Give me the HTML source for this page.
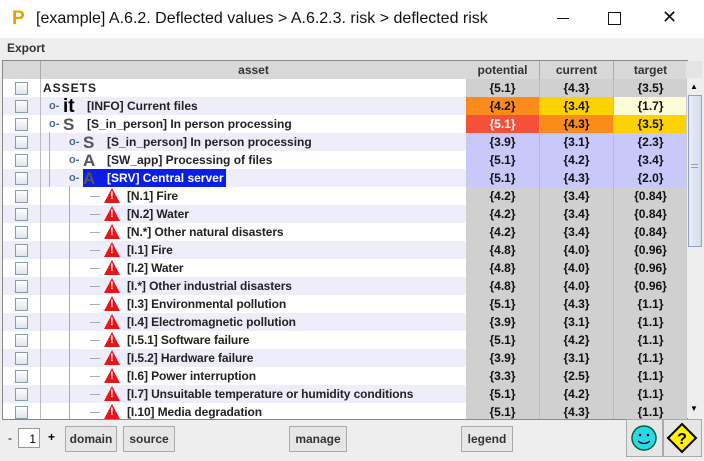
<html><head><style>
body{margin:0;width:704px;height:461px;background:#eeeeee;font-family:"Liberation Sans",sans-serif;position:relative;overflow:hidden}
.title{position:absolute;left:0;top:0;width:704px;height:38px;background:#fff;font-size:16px;color:#111}
.menu{position:absolute;top:38px;left:0;width:704px;height:20px;background:#eeeeee;font-size:12px;font-weight:bold;color:#333}
.tbl{position:absolute;left:2px;top:60px;width:684px;height:358px;overflow:hidden;background:#fff;border:1px solid #888}
.hdr{position:absolute;top:0;height:18px;background:#d8d8d8;border-right:1px solid #aaa;border-bottom:1px solid #999;font-size:12px;font-weight:bold;color:#333;text-align:center;line-height:18px}
.row{position:absolute;left:0;width:684px;height:18px;border-bottom:1px solid #ccd;font-size:12px;font-weight:bold;color:#222}
.cb{position:absolute;left:12px;top:3px;width:11px;height:11px;border:1px solid #8a9aa8;background:linear-gradient(#fff,#dde4ea)}
.v{position:absolute;top:0;height:18px;line-height:18px;text-align:center;width:73px;border-right:1px solid #bbb;color:#111}
.t{position:absolute;top:0;line-height:18px;white-space:nowrap}
.tri{position:absolute;top:1px;width:0;height:0;border-left:8px solid transparent;border-right:8px solid transparent;border-bottom:15px solid #e8141a}
.tri:after{content:"!";position:absolute;left:-2px;top:2px;color:#fff;font-size:11px;font-weight:bold}
.btn{position:absolute;top:426px;height:24px;border:1px solid #aaa;background:#e6e6e6;font-size:12px;font-weight:bold;color:#333;line-height:24px;text-align:center}
</style></head><body>
<div class="title"><span style="position:absolute;left:12px;top:8px;font-weight:bold;font-size:19px;color:#e8a000">P</span><span style="position:absolute;left:36px;top:10px">[example] A.6.2. Deflected values &gt; A.6.2.3. risk &gt; deflected risk</span>
<span style="position:absolute;left:557px;top:18px;width:12px;border-top:1px solid #111"></span>
<span style="position:absolute;left:608px;top:12px;width:11px;height:11px;border:1px solid #111"></span>
<span style="position:absolute;left:662px;top:7px;font-size:18px">✕</span></div>
<div class="menu"><span style="position:absolute;left:7px;top:3px">Export</span></div>
<div class="tbl">
<div class="hdr" style="left:0;width:37px"></div>
<div class="hdr" style="left:38px;width:425px">asset</div>
<div class="hdr" style="left:463px;width:73px">potential</div>
<div class="hdr" style="left:537px;width:73px">current</div>
<div class="hdr" style="left:611px;width:73px">target</div>
<div id="rows"></div>
</div>
<div style="position:absolute;left:686px;top:61px;width:16px;height:17px;background:#e4e4e4;border-bottom:1px solid #aaa"></div>
<div style="position:absolute;left:686px;top:78px;width:16px;height:340px;background:#eee;border-left:1px solid #ccc">
<div style="position:absolute;left:1px;top:17px;width:12px;height:150px;background:linear-gradient(90deg,#e8eef8,#d4dcec);border:1px solid #8fa3c0"></div>
<div style="position:absolute;left:4px;top:86px;width:7px;border-top:1px solid #8fa3c0;height:2px;border-bottom:1px solid #8fa3c0"></div>
<div style="position:absolute;left:3px;top:4px;font-size:8px">▲</div><div style="position:absolute;left:3px;top:326px;font-size:8px">▼</div></div>
<div style="position:absolute;left:8px;top:431px;font-size:12px">-</div>
<div style="position:absolute;left:18px;top:428px;width:22px;height:20px;background:#fff;border:1px solid #999;font-size:12px;text-align:right;line-height:20px;box-sizing:border-box;padding-right:3px">1</div>
<div style="position:absolute;left:48px;top:430px;font-size:12px;font-weight:bold">+</div>
<div class="btn" style="left:65px;width:50px">domain</div>
<div class="btn" style="left:123px;width:50px">source</div>
<div class="btn" style="left:289px;width:56px">manage</div>
<div class="btn" style="left:461px;width:50px">legend</div>
<div class="btn" style="left:626px;top:419px;width:35px;height:36px"><svg width="35" height="36" style="position:absolute;left:0;top:0"><circle cx="17" cy="18" r="12" fill="#2cd8e8" stroke="#063" stroke-width="1.5"/><circle cx="13" cy="15" r="1.3" fill="#000"/><circle cx="21" cy="15" r="1.3" fill="#000"/><path d="M11 21 Q17 26 23 21" stroke="#000" fill="none" stroke-width="1.3"/></svg></div>
<div class="btn" style="left:663px;top:419px;width:37px;height:36px"><svg width="37" height="36" style="position:absolute;left:0;top:0"><path d="M18 4 L32 18 L18 32 L4 18 Z" fill="#fff200" stroke="#000" stroke-width="2"/><text x="18" y="24" font-size="16" font-weight="bold" text-anchor="middle" font-family="Liberation Sans">?</text></svg></div>
<script>
var R=[
["ASSETS","","{5.1}","{4.3}","{3.5}",0,"asset"],
["[INFO] Current files","it","{4.2}","{3.4}","{1.7}",1,"info"],
["[S_in_person] In person processing","S","{5.1}","{4.3}","{3.5}",1,"s"],
["[S_in_person] In person processing","S","{3.9}","{3.1}","{2.3}",2,"l"],
["[SW_app] Processing of files","A","{5.1}","{4.2}","{3.4}",2,"l"],
["[SRV] Central server","A","{5.1}","{4.3}","{2.0}",2,"sel"],
["[N.1] Fire","","{4.2}","{3.4}","{0.84}",3,"r"],
["[N.2] Water","","{4.2}","{3.4}","{0.84}",3,"r"],
["[N.*] Other natural disasters","","{4.2}","{3.4}","{0.84}",3,"r"],
["[I.1] Fire","","{4.8}","{4.0}","{0.96}",3,"r"],
["[I.2] Water","","{4.8}","{4.0}","{0.96}",3,"r"],
["[I.*] Other industrial disasters","","{4.8}","{4.0}","{0.96}",3,"r"],
["[I.3] Environmental pollution","","{5.1}","{4.3}","{1.1}",3,"r"],
["[I.4] Electromagnetic pollution","","{3.9}","{3.1}","{1.1}",3,"r"],
["[I.5.1] Software failure","","{5.1}","{4.2}","{1.1}",3,"r"],
["[I.5.2] Hardware failure","","{3.9}","{3.1}","{1.1}",3,"r"],
["[I.6] Power interruption","","{3.3}","{2.5}","{1.1}",3,"r"],
["[I.7] Unsuitable temperature or humidity conditions","","{5.1}","{4.2}","{1.1}",3,"r"],
["[I.10] Media degradation","","{5.1}","{4.3}","{1.1}",3,"r"]];
var h="";
R.forEach(function(r,i){var y=18+i*18;var bg=i%2?"#eeeefa":"#fff";
h+='<div class="row" style="top:'+y+'px;background:'+bg+'"><div class="cb"></div><div style="position:absolute;left:37px;top:0;height:18px;border-left:1px solid #bbb"></div>';
var cols=["#d0d0d0","#d0d0d0","#d0d0d0"],fc=["#111","#111","#111"];
if(r[6]=="info")cols=["#fb8c1c","#fcd200","#fefbd8"];
if(r[6]=="s"){cols=["#f5503a","#fb8c1c","#fcd200"];fc[0]="#fff";}
if(r[6]=="l"||r[6]=="sel")cols=["#c8c8fa","#c8c8fa","#c8c8fa"];
if(r[6]=="asset")h+='<span class="t" style="left:40px;letter-spacing:1px">ASSETS</span>';
else if(r[6]=="r"){h+='<div style="position:absolute;left:66px;top:-1px;height:20px;border-left:1px solid #aab"></div><div style="position:absolute;left:87px;top:9px;width:10px;border-top:1px solid #aab"></div><div class="tri" style="left:101px"></div><span class="t" style="left:124px;letter-spacing:-0.1px">'+r[0]+'</span>';}
else{var x=r[5]==1?46:66;
h+='<span class="t" style="left:'+x+'px;color:#4a6a90;font-size:11px">o-</span>';
h+='<span class="t" style="left:'+(x+14)+'px;font-size:'+(r[1]=="it"?19:17)+'px;color:'+(r[1]=="it"?"#000":"#555")+';line-height:20px">'+r[1]+'</span>';
var s=r[6]=="sel"?'background:#0a1ee6;color:#fff;padding-right:2px;':'';
h+='<span class="t" style="left:'+(x+38)+'px;'+s+'">'+r[0]+'</span>';
if(r[6]=="sel")h+='<span style="position:absolute;left:80px;top:0;width:24px;height:18px;background:#0a1ee6;z-index:-0"></span><span class="t" style="left:80px;font-size:17px;color:#555;line-height:20px">A</span>';
if(r[5]==2)h+='<div style="position:absolute;left:46px;top:-1px;height:20px;border-left:1px solid #aab"></div>';}
for(var k=0;k<3;k++)h+='<div class="v" style="left:'+(463+k*74)+'px;background:'+cols[k]+';color:'+fc[k]+'">'+r[2+k]+'</div>';
h+='</div>';});
document.getElementById("rows").innerHTML=h;
</script>
</body></html>
